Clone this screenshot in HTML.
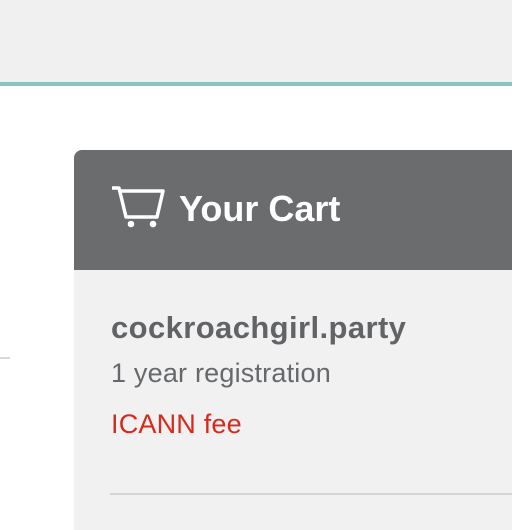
<!DOCTYPE html>
<html><head><style>
html,body{margin:0;padding:0;width:512px;height:508px;overflow:hidden;background:#fff;font-family:"Liberation Sans",sans-serif;}
.top{position:absolute;left:0;top:0;width:512px;height:82px;background:#f0f0f0;border-bottom:4px solid #8ac3bf;}
.lline{position:absolute;left:0;top:357px;width:10px;height:2px;background:#d8d8d8;}
.card{position:absolute;left:74px;top:150px;width:460px;height:380px;background:#f1f1f1;border-radius:8px 0 0 0;overflow:hidden;}
.hdr{position:absolute;left:0;top:0;width:100%;height:120px;background:#6b6c6e;}
.title{position:absolute;left:105px;top:38px;color:#fff;font-weight:bold;font-size:36px;}
.t{position:absolute;left:37px;white-space:nowrap;}
.d{top:160px;font-weight:bold;font-size:31px;color:#616366;letter-spacing:0.4px;}
.r{top:208px;font-size:27px;color:#66686b;letter-spacing:0.2px;}
.f{top:259px;font-size:27px;color:#d9291c;letter-spacing:0.2px;}
.div{position:absolute;left:36px;top:343px;width:440px;height:2px;background:#d5d5d5;}
</style></head><body>
<div class="top"></div>
<div class="lline"></div>
<div class="card">
 <div class="hdr">
  <svg style="position:absolute;left:36px;top:34px" width="56" height="46" viewBox="0 0 56 46">
   <path d="M2 4 H9 L16 33 H47 L53 7 H10" fill="none" stroke="#fff" stroke-width="3.5" stroke-linejoin="round"/>
   <circle cx="21" cy="40" r="3.3" fill="#fff"/>
   <circle cx="43" cy="40" r="3.3" fill="#fff"/>
  </svg>
  <div class="title">Your Cart</div>
 </div>
 <div class="t d">cockroachgirl.party</div>
 <div class="t r">1 year registration</div>
 <div class="t f">ICANN fee</div>
 <div class="div"></div>
</div>
</body></html>
